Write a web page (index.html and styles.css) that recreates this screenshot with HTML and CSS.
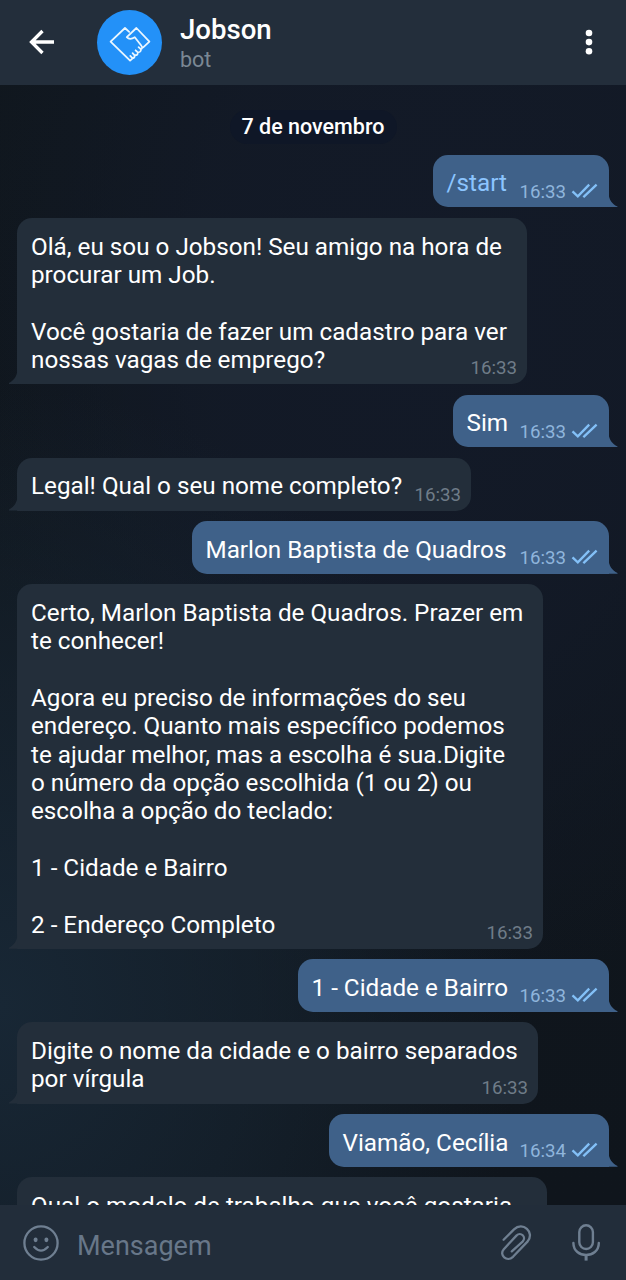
FILE: index.html
```
<!DOCTYPE html>
<html lang="pt-BR">
<head>
<meta charset="utf-8">
<title>Jobson</title>
<link rel="stylesheet" href="styles.css">
</head>
<body>
<svg width="0" height="0" class="defs">
  <symbol id="checks" viewBox="0 0 28 16">
    <path d="M1.5 8.4 L6.8 13.4 L18.2 1.6 M12.3 12.6 L13.2 13.4 L25.6 1.6" fill="none" stroke="#83c0f7" stroke-width="2.3"/>
  </symbol>
</svg>
<div class="app">
  <header class="header">
    <svg class="back" width="26" height="26" viewBox="0 0 26 26"><path d="M25 13H3M13.5 2L2.5 13L13.5 24" fill="none" stroke="#fff" stroke-width="3.3"/></svg>
    <div class="avatar">
      <svg width="44" height="40" viewBox="0 0 44 40" fill="none" stroke="#eaf6ff" stroke-width="1.8" stroke-linejoin="round" stroke-linecap="round">
        <path d="M21.2 8.8L17 5L2.6 18.6L22.1 37.6L24.6 35.3L22.3 32.9M24.6 35.3Q27.2 34.8 26.4 32.2L24.6 30.2M26.4 32.2Q30.2 32.6 29.8 29.4L27.6 27.3M29.8 29.4Q33.4 29.2 32.8 26.2L30.6 24.2M32.8 26.2Q35.2 25 33.4 22.8L26.8 14.2Q21.8 17.4 18.8 14.2L28.4 5L41.4 18.6L35.2 24.4"/>
      </svg>
    </div>
    <div class="peer">
      <h1 class="name">Jobson</h1>
      <p class="status">bot</p>
    </div>
    <svg class="more" width="8" height="26" viewBox="0 0 8 26" fill="#fff"><circle cx="4" cy="4" r="3.3"/><circle cx="4" cy="13.1" r="3.3"/><circle cx="4" cy="22.2" r="3.3"/></svg>
  </header>

  <main class="chat">
    <div class="date">7 de novembro</div>

    <div class="msg out w-start"><p class="text command">/start</p><span class="time">16:33<svg class="ticks"><use href="#checks"/></svg></span></div>

    <div class="msg in w-hello"><p class="text">Olá, eu sou o Jobson! Seu amigo na hora de<br>procurar um Job.<br><br>Você gostaria de fazer um cadastro para ver<br>nossas vagas de emprego?</p><span class="time">16:33</span></div>

    <div class="msg out w-yes"><p class="text">Sim</p><span class="time">16:33<svg class="ticks"><use href="#checks"/></svg></span></div>

    <div class="msg in w-ask"><p class="text">Legal! Qual o seu nome completo?</p><span class="time">16:33</span></div>

    <div class="msg out w-fullname"><p class="text">Marlon Baptista de Quadros</p><span class="time">16:33<svg class="ticks"><use href="#checks"/></svg></span></div>

    <div class="msg in w-address"><p class="text">Certo, Marlon Baptista de Quadros. Prazer em<br>te conhecer!<br><br>Agora eu preciso de informações do seu<br>endereço. Quanto mais específico podemos<br>te ajudar melhor, mas a escolha é sua.Digite<br>o número da opção escolhida (1 ou 2) ou<br>escolha a opção do teclado:<br><br>1 - Cidade e Bairro<br><br>2 - Endereço Completo</p><span class="time">16:33</span></div>

    <div class="msg out w-option"><p class="text">1 - Cidade e Bairro</p><span class="time">16:33<svg class="ticks"><use href="#checks"/></svg></span></div>

    <div class="msg in w-city"><p class="text">Digite o nome da cidade e o bairro separados<br>por vírgula</p><span class="time">16:33</span></div>

    <div class="msg out w-place"><p class="text">Viamão, Cecília</p><span class="time">16:34<svg class="ticks"><use href="#checks"/></svg></span></div>

    <div class="msg in w-model"><p class="text">Qual o modelo de trabalho que você gostaria</p></div>
  </main>

  <footer class="composer">
    <svg class="emoji" width="36" height="36" viewBox="0 0 36 36" fill="none" stroke="#6f7f91" stroke-width="2.3" stroke-linecap="round"><circle cx="18" cy="18" r="16.6"/><path d="M11.2 22Q18 29.2 24.8 22"/><ellipse cx="12.6" cy="14.8" rx="2" ry="2.4" fill="#6f7f91" stroke="none"/><ellipse cx="23.4" cy="14.8" rx="2" ry="2.4" fill="#6f7f91" stroke="none"/></svg>
    <span class="placeholder">Mensagem</span>
    <svg class="clip" width="32" height="36" viewBox="0 0 32 36" fill="none" stroke="#6f7f91" stroke-width="2.3" stroke-linecap="round" stroke-linejoin="round"><path d="M3.6 14.8L14 4.4C22.8 -4 35 7.3 27.7 16.4L13 31.8C7 37.6 -1.4 30.2 3.8 24.2L16.4 10.6C20.8 6.3 26.8 12 22.6 16.6L11.8 26.4"/></svg>
    <svg class="mic" width="28" height="38" viewBox="0 0 28 38" fill="none" stroke="#6f7f91" stroke-width="2.4" stroke-linecap="round"><rect x="7.3" y="1.3" width="13.6" height="23.7" rx="6.8"/><path d="M1.4 19C1.4 35 26.8 35 26.8 19"/><path d="M14.1 31V36.6" stroke-width="3" stroke-linecap="butt"/></svg>
  </footer>
</div>
</body>
</html>
```
FILE: styles.css
```
* { box-sizing: border-box; }

body {
  margin: 0;
  background: #11171f;
  color: #fff;
  font-family: Roboto, "Liberation Sans", sans-serif;
}

h1, p { margin: 0; font-weight: 400; }

.defs { position: absolute; }

.app {
  display: flex;
  flex-direction: column;
  width: 626px;
  height: 1280px;
  overflow: hidden;
}

.header {
  display: flex;
  flex: none;
  align-items: center;
  height: 85px;
  padding-left: 29px;
  padding-right: 33px;
  background: #232e3b;
}

.back { flex: none; margin-bottom: 1px; }

.avatar {
  display: flex;
  flex: none;
  align-items: center;
  justify-content: center;
  width: 65px;
  height: 65px;
  margin-left: 42px;
  border-radius: 50%;
  background: #2391f8;
}

.peer { flex: 1; margin: 2px 0 0 18px; }

.name {
  font-size: 27.6px;
  font-weight: 500;
  line-height: 32px;
}

.status {
  color: #7b8894;
  font-size: 21.5px;
  line-height: 27px;
}

.more { flex: none; margin-bottom: 1px; }

.chat {
  display: flex;
  flex: 1;
  flex-direction: column;
  gap: 10.5px;
  min-height: 0;
  padding: 25.2px 17px 0;
  overflow: hidden;
  background:
    radial-gradient(ellipse 520px 620px at 0 920px, #182735, rgba(24, 39, 53, 0.55) 50%, transparent),
    radial-gradient(ellipse 480px 700px at 440px 220px, #131a28, rgba(19, 26, 40, 0.8) 50%, transparent),
    linear-gradient(#10171e, #0f151c);
}

.date {
  align-self: center;
  width: 167px;
  height: 34px;
  border-radius: 17px;
  background: #0f1727;
  font-size: 21.5px;
  font-weight: 500;
  line-height: 34.6px;
  text-align: center;
}

.msg {
  position: relative;
  display: grid;
  flex: none;
  padding: 14.6px 10px 9.8px 14px;
  border-radius: 15px;
}

.msg > * { grid-area: 1 / 1; }

.msg::after {
  content: "";
  position: absolute;
  bottom: 0;
  width: 9px;
  height: 15px;
}

.in {
  align-self: flex-start;
  border-bottom-left-radius: 0;
  background: #232e3a;
}

.in::after {
  left: -8.5px;
  background: #232e3a;
  clip-path: path("M9 0C9 7 5 12 0 14.2V15H9Z");
}

.out {
  align-self: flex-end;
  padding-left: 13.5px;
  border-bottom-right-radius: 0;
  background: #3f6189;
}

.out::after {
  right: -8.5px;
  background: #3f6189;
  clip-path: path("M0 0C0 7 4 12 9 14.2V15H0Z");
}

.text {
  font-size: 24.25px;
  line-height: 28.35px;
  white-space: nowrap;
}

.command { color: #8cc5ff; }

.time {
  display: flex;
  place-self: end;
  gap: 5px;
  margin-bottom: -5.1px;
  color: #6f7c88;
  font-size: 18.7px;
  line-height: 22px;
}

.out .time { color: #8fb5dc; }

.ticks {
  width: 28px;
  height: 16px;
  margin-top: 2px;
}

.w-start { width: 176px; }
.w-hello { width: 510px; }
.w-yes { width: 156px; }
.w-ask { width: 454px; }
.w-fullname { width: 417px; }
.w-address { width: 526px; }
.w-option { width: 311px; }
.w-city { width: 521px; }
.w-place { width: 280px; }
.w-model { width: 530px; }

.composer {
  display: flex;
  flex: none;
  align-items: center;
  height: 75px;
  padding: 1px 26px 0 23px;
  background: #222d3a;
}

.placeholder {
  flex: 1;
  margin: 5px 0 0 18px;
  color: #687789;
  font-size: 27px;
  line-height: 32px;
}

.mic { margin-left: 40px; }
```
